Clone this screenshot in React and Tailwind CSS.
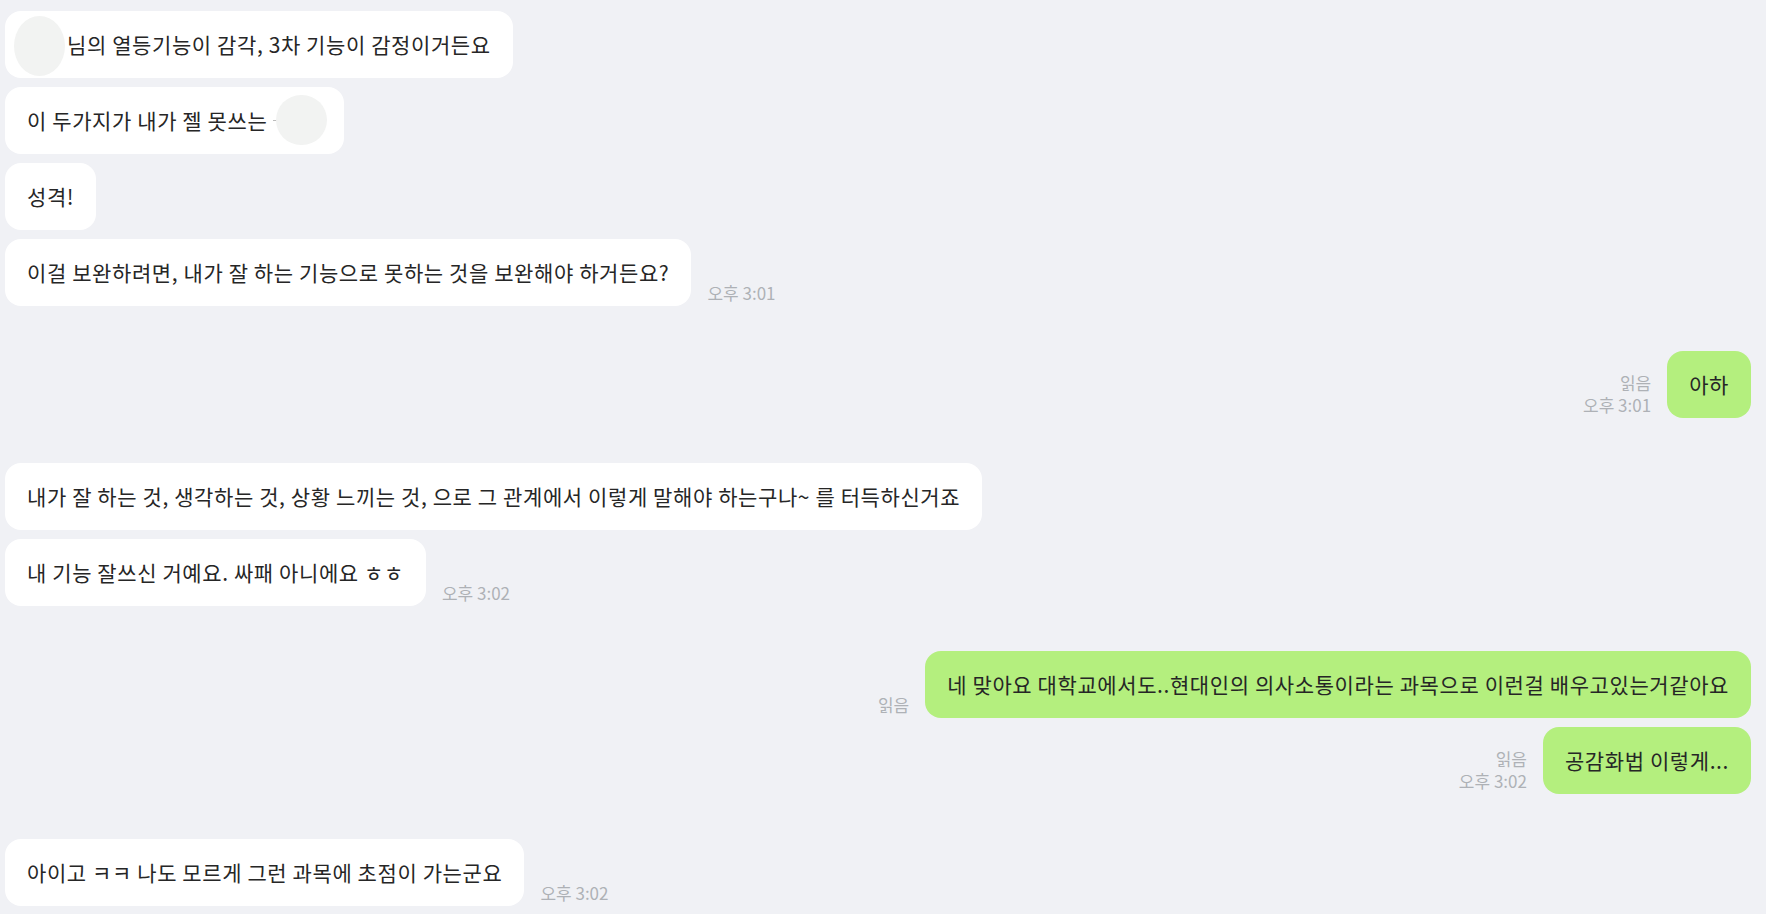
import React from 'react';

const font = { fontFamily: '"Noto Sans CJK KR", "Noto Sans", sans-serif' };

function Bubble({ children, mine, className = '' }) {
  return (
    <div
      className={`relative rounded-[16px] px-[22px] py-[19px] text-[21px] leading-[29px] tracking-[0.6px] text-[#262626] whitespace-nowrap ${
        mine ? 'bg-[#b4ef7e]' : 'bg-white'
      } ${className}`}
    >
      {children}
    </div>
  );
}

function LeftRow({ text, time }) {
  return (
    <div className="flex items-end gap-[16px]">
      <Bubble>{text}</Bubble>
      {time && <span className="mb-[1px] text-[17px] leading-[24px] text-[#aeb1b6]">{time}</span>}
    </div>
  );
}

function RightRow({ text, read, time }) {
  return (
    <div className="flex items-end justify-end gap-[16px]">
      <div className="mb-[2px] flex flex-col items-end text-[17px] leading-[22px] text-[#aeb1b6]">
        {read && <span>읽음</span>}
        {time && <span>{time}</span>}
      </div>
      <Bubble mine>{text}</Bubble>
    </div>
  );
}

export default function App() {
  return (
    <div className="min-h-screen bg-[#f0f1f5] pl-[5px] pr-[15px] pt-[11px]" style={font}>
      <div className="flex flex-col gap-[9px]">
        <div className="flex">
          <Bubble className="pl-[62px]">
            <span className="absolute left-[9px] top-[5px] h-[60px] w-[51px] rounded-[50%] bg-[#f2f3f2]" />
            님의 열등기능이 감각, 3차 기능이 감정이거든요
          </Bubble>
        </div>
        <div className="flex">
          <Bubble className="pr-[77px]">
            이 두가지가 내가 젤 못쓰는
            <span className="absolute right-[66px] top-[33px] h-px w-[5px] bg-[#bbb]" />
            <span className="absolute right-[17px] top-[8px] h-[50px] w-[51px] rounded-full bg-[#f2f3f2]" />
          </Bubble>
        </div>
        <div className="flex">
          <Bubble>성격!</Bubble>
        </div>
        <LeftRow text="이걸 보완하려면, 내가 잘 하는 기능으로 못하는 것을 보완해야 하거든요?" time="오후 3:01" />
      </div>

      <div className="mt-[45px] flex flex-col gap-[9px]">
        <RightRow text="아하" read time="오후 3:01" />
      </div>

      <div className="mt-[45px] flex flex-col gap-[9px]">
        <LeftRow text="내가 잘 하는 것, 생각하는 것, 상황 느끼는 것, 으로 그 관계에서 이렇게 말해야 하는구나~ 를 터득하신거죠" />
        <LeftRow text="내 기능 잘쓰신 거예요. 싸패 아니에요 ㅎㅎ" time="오후 3:02" />
      </div>

      <div className="mt-[45px] flex flex-col gap-[9px]">
        <RightRow text="네 맞아요 대학교에서도..현대인의 의사소통이라는 과목으로 이런걸 배우고있는거같아요" read />
        <RightRow text="공감화법 이렇게..." read time="오후 3:02" />
      </div>

      <div className="mt-[45px] flex flex-col gap-[9px]">
        <LeftRow text="아이고 ㅋㅋ 나도 모르게 그런 과목에 초점이 가는군요" time="오후 3:02" />
      </div>
    </div>
  );
}
